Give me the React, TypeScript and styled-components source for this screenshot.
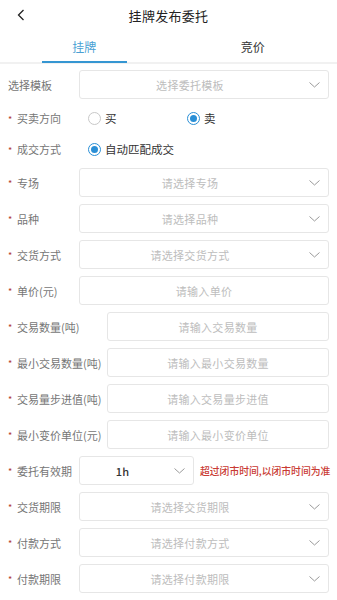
import React, { useState } from 'react';
import styled, { createGlobalStyle } from 'styled-components';

const GlobalStyle = createGlobalStyle`
  body {
    margin: 0;
    background: #ffffff;
    font-family: 'Noto Sans CJK SC', 'Noto Sans', sans-serif;
  }
`;

const Page = styled.div`
  width: 337px;
  min-height: 600px;
  background: #ffffff;
`;

const Header = styled.div`
  position: relative;
  height: 31px;
  display: flex;
  align-items: center;
  justify-content: center;
`;

const BackButton = styled.div`
  position: absolute;
  left: 14px;
  top: 7px;
  width: 14px;
  height: 16px;
  display: flex;
  align-items: center;
  justify-content: center;
`;

const Title = styled.div`
  font-size: 13px;
  color: #222222;
  letter-spacing: 0.3px;
`;

const Tabs = styled.div`
  display: flex;
  height: 31px;
  border-bottom: 2px solid #f1f1f1;
`;

const Tab = styled.div<{ active?: boolean }>`
  flex: 1;
  display: flex;
  align-items: center;
  justify-content: center;
  position: relative;
  font-size: 12px;
  color: ${(p) => (p.active ? '#4a9fd3' : '#333333')};

  &::after {
    content: '';
    display: ${(p) => (p.active ? 'block' : 'none')};
    position: absolute;
    bottom: -1px;
    left: 42px;
    right: 42px;
    height: 2px;
    background: #3596d2;
  }
`;

const Form = styled.div`
  display: flex;
  flex-direction: column;
  gap: 7px;
  padding: 6px 8px 0 8px;
`;

const Row = styled.div<{ short?: boolean }>`
  display: flex;
  align-items: center;
  min-height: ${(p) => (p.short ? '24px' : '29px')};
`;

const Label = styled.div<{ wide?: boolean }>`
  width: ${(p) => (p.wide ? '99px' : '71px')};
  flex-shrink: 0;
  display: flex;
  align-items: center;
  font-size: 11px;
  color: #767676;
  white-space: nowrap;
`;

const Star = styled.span`
  color: #b23b30;
  font-size: 9px;
  line-height: 1;
  width: 9px;
  padding-top: 2px;
`;

const Box = styled.div<{ width?: string }>`
  flex: ${(p) => (p.width ? '0 0 auto' : '1')};
  width: ${(p) => p.width || 'auto'};
  height: 29px;
  box-sizing: border-box;
  border: 1px solid #e6e6e6;
  border-radius: 3px;
  display: flex;
  align-items: center;
`;

const BoxText = styled.div<{ value?: boolean }>`
  flex: 1;
  text-align: center;
  font-size: 11px;
  font-weight: ${(p) => (p.value ? 500 : 400)};
  color: ${(p) => (p.value ? '#333333' : '#bdbdbd')};
  letter-spacing: 0.3px;
`;

const Chevron = styled.div`
  width: 28px;
  display: flex;
  align-items: center;
  justify-content: center;
`;

const RadioGroup = styled.div`
  display: flex;
  align-items: center;
`;

const RadioOption = styled.div<{ auto?: boolean }>`
  width: ${(p) => (p.auto ? 'auto' : '90px')};
  display: flex;
  align-items: center;
  padding-left: 9px;
  gap: 4px;
  font-size: 11.5px;
  color: #333333;
  cursor: pointer;
`;

const RadioCircle = styled.span<{ checked?: boolean }>`
  width: 13px;
  height: 13px;
  box-sizing: border-box;
  border-radius: 50%;
  border: ${(p) => (p.checked ? '1.5px solid #2a8fd6' : '1px solid #c8c8c8')};
  display: flex;
  align-items: center;
  justify-content: center;

  &::after {
    content: '';
    display: ${(p) => (p.checked ? 'block' : 'none')};
    width: 7px;
    height: 7px;
    border-radius: 50%;
    background: #2a8fd6;
  }
`;

const Notice = styled.div`
  margin-left: 6px;
  font-size: 9.8px;
  font-weight: 500;
  color: #c93a33;
  white-space: nowrap;
`;

const ChevronIcon = () => (
  <svg width="11" height="6" viewBox="0 0 11 6">
    <path d="M0.5 0.5 L5.5 5 L10.5 0.5" fill="none" stroke="#9a9a9a" strokeWidth="1" />
  </svg>
);

interface FieldProps {
  label: string;
  required?: boolean;
  wide?: boolean;
  placeholder: string;
  select?: boolean;
}

function Field({ label, required = true, wide, placeholder, select }: FieldProps) {
  return (
    <Row>
      <Label wide={wide}>
        {required && <Star>*</Star>}
        {label}
      </Label>
      <Box>
        <BoxText>{placeholder}</BoxText>
        {select && (
          <Chevron>
            <ChevronIcon />
          </Chevron>
        )}
      </Box>
    </Row>
  );
}

export default function App() {
  const [tab, setTab] = useState(0);
  const [side, setSide] = useState('sell');

  return (
    <Page>
      <GlobalStyle />
      <Header>
        <BackButton>
          <svg width="8" height="12" viewBox="0 0 8 12">
            <path d="M6.5 1 L1.5 6 L6.5 11" fill="none" stroke="#222" strokeWidth="1.3" />
          </svg>
        </BackButton>
        <Title>挂牌发布委托</Title>
      </Header>
      <Tabs>
        <Tab active={tab === 0} onClick={() => setTab(0)}>
          挂牌
        </Tab>
        <Tab active={tab === 1} onClick={() => setTab(1)}>
          竞价
        </Tab>
      </Tabs>

      <Form>
        <Field label="选择模板" required={false} placeholder="选择委托模板" select />
        <Row short>
          <Label>
            <Star>*</Star>买卖方向
          </Label>
          <RadioGroup>
            <RadioOption onClick={() => setSide('buy')}>
              <RadioCircle checked={side === 'buy'} />买
            </RadioOption>
            <RadioOption onClick={() => setSide('sell')}>
              <RadioCircle checked={side === 'sell'} />卖
            </RadioOption>
          </RadioGroup>
        </Row>
        <Row short>
          <Label>
            <Star>*</Star>成交方式
          </Label>
          <RadioGroup>
            <RadioOption auto>
              <RadioCircle checked />自动匹配成交
            </RadioOption>
          </RadioGroup>
        </Row>
        <Field label="专场" placeholder="请选择专场" select />
        <Field label="品种" placeholder="请选择品种" select />
        <Field label="交货方式" placeholder="请选择交货方式" select />
        <Field label="单价(元)" placeholder="请输入单价" />
        <Field label="交易数量(吨)" wide placeholder="请输入交易数量" />
        <Field label="最小交易数量(吨)" wide placeholder="请输入最小交易数量" />
        <Field label="交易量步进值(吨)" wide placeholder="请输入交易量步进值" />
        <Field label="最小变价单位(元)" wide placeholder="请输入最小变价单位" />
        <Row>
          <Label>
            <Star>*</Star>委托有效期
          </Label>
          <Box width="115px">
            <BoxText value>1h</BoxText>
            <Chevron>
              <ChevronIcon />
            </Chevron>
          </Box>
          <Notice>超过闭市时间,以闭市时间为准</Notice>
        </Row>
        <Field label="交货期限" placeholder="请选择交货期限" select />
        <Field label="付款方式" placeholder="请选择付款方式" select />
        <Field label="付款期限" placeholder="请选择付款期限" select />
      </Form>
    </Page>
  );
}
